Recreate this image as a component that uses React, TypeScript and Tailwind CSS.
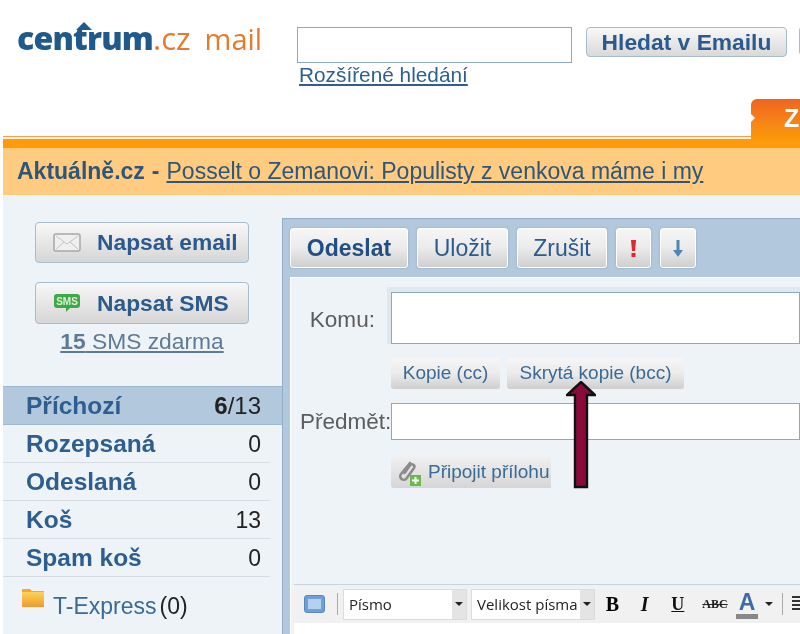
import React from "react";

const sans = "font-['Liberation_Sans',Arial,sans-serif]";
const btn = "bg-gradient-to-b from-[#f6f6f6] via-[#ebebeb] to-[#cfcfcf]";

function Envelope() {
  return (
    <svg width="28" height="19" viewBox="0 0 28 19" className="shrink-0">
      <rect x="1" y="1" width="26" height="17" rx="2" fill="#efefef" stroke="#a8a8a8" strokeWidth="1.5" />
      <path d="M3 3 L14 11 L25 3 M3 16 L11 9 M25 16 L17 9" fill="none" stroke="#c4c4c4" strokeWidth="1" />
    </svg>
  );
}

function SmsIcon() {
  return (
    <svg width="28" height="20" viewBox="0 0 28 20" className="shrink-0">
      <path d="M4 1 H24 a3 3 0 0 1 3 3 V12 a3 3 0 0 1 -3 3 H17 L13 19 V15 H4 a3 3 0 0 1 -3 -3 V4 a3 3 0 0 1 3 -3 Z" fill="#3fa84a" />
      <text x="14" y="12" textAnchor="middle" fontSize="10" fontWeight="700" fill="#d8f0d0" fontFamily="Liberation Sans">SMS</text>
    </svg>
  );
}

function Folder() {
  return (
    <svg width="24" height="21" viewBox="0 0 24 21" className="shrink-0">
      <defs>
        <linearGradient id="fg" x1="0" y1="0" x2="0" y2="1">
          <stop offset="0" stopColor="#fdd35a" />
          <stop offset="1" stopColor="#ee9a2c" />
        </linearGradient>
      </defs>
      <path d="M1 3 a1 1 0 0 1 1 -1 H9 L11 4 H23 V20 H1 Z" fill="#f2a833" />
      <rect x="1" y="5" width="22" height="15" fill="url(#fg)" />
    </svg>
  );
}

function Clip() {
  return (
    <svg width="28" height="28" viewBox="0 0 28 28" className="shrink-0">
      <path d="M15 4 L6 15 a3.5 3.5 0 0 0 5.5 4.5 L19 9 a2.4 2.4 0 0 0 -3.7 -3 L9.5 14" fill="none" stroke="#8c8c8c" strokeWidth="2.6" strokeLinecap="round" />
      <rect x="15" y="16" width="11" height="11" fill="#69b94d" />
      <path d="M20.5 18 V25 M17 21.5 H24" stroke="#fff" strokeWidth="2" />
    </svg>
  );
}

function NavRow({ name, count }: { name: string; count: string }) {
  return (
    <div className="h-[38px] mr-[12px] pl-[23px] pr-[9px] pt-[2px] flex items-center justify-between border-b border-[#d5dde3]">
      <span className="text-[24.5px] font-bold text-[#2e5d8f]">{name}</span>
      <span className="text-[23px] text-[#222]">{count}</span>
    </div>
  );
}

function ToolBtn({ children, className }: { children: React.ReactNode; className: string }) {
  return (
    <div className={`h-[40px] rounded-[3px] border border-white shadow-[0_0_2px_#8aa0b5] flex items-center justify-center text-[23px] text-[#2d5a8c] ${btn} ${className}`}>
      {children}
    </div>
  );
}

function Select({ label, w }: { label: string; w: string }) {
  return (
    <div className={`h-[31px] flex bg-white border border-[#dcdcdc] ${w}`}>
      <span className="flex-1 min-w-0 pl-[5px] text-[15px] leading-[29px] text-[#222] font-['Open_Sans',sans-serif] whitespace-nowrap">{label}</span>
      <span className="w-[14px] bg-[#e4e4e4] flex items-center justify-center shrink-0">
        <span className="w-0 h-0 border-x-[4px] border-x-transparent border-t-[4px] border-t-[#222]" />
      </span>
    </div>
  );
}

export default function App() {
  return (
    <div className={`relative w-[800px] h-[634px] overflow-hidden bg-white blur-[0.5px] ${sans}`}>
      {/* Header */}
      <div className="h-[136px] flex items-start">
        <div className="w-[297px] shrink-0 pl-[17px] pt-[18px] flex items-baseline whitespace-nowrap">
          <span className="relative text-[32px] leading-[40px] font-extrabold tracking-[-0.8px] text-[#1f5a8a] font-['Open_Sans',sans-serif]">
            centrum
            <svg width="16" height="9" viewBox="0 0 16 9" className="absolute left-[59px] top-[4px]">
              <path d="M8 0 L16 8 H0 Z" fill="#1f5a8a" />
            </svg>
          </span>
          <span className="text-[31px] leading-[40px] text-[#e67a2e] font-['Open_Sans',sans-serif]">.cz</span>
          <span className="ml-[14px] text-[29px] leading-[40px] text-[#e67a2e] font-['Open_Sans',sans-serif]">mail</span>
        </div>
        <div className="w-[275px] shrink-0 pt-[27px]">
          <div className="h-[36px] bg-white border border-[#8fa9bf]" />
          <a className="block pl-[2px] text-[20.8px] leading-[24px] text-[#2f5f92] underline whitespace-nowrap">Rozšířené hledání</a>
        </div>
        <div className="ml-[14px] mt-[27px] w-[201px] h-[30px] shrink-0 rounded-[4px] border border-[#a9bccb] flex items-center justify-center bg-gradient-to-b from-[#f8f8f8] to-[#d9d9d9] text-[22.8px] font-bold text-[#2d5a8c] whitespace-nowrap">
          Hledat v Emailu
        </div>
        <div className="ml-[12px] mt-[27px] w-[4px] h-[28px] shrink-0 rounded-l-[3px] border border-[#a9bccb] bg-[#eee]" />
      </div>

      {/* Tab over the orange line */}
      <div className="absolute left-[751px] top-[99px] w-[49px] h-[41px] rounded-tl-[6px] bg-gradient-to-b from-[#f0641f] to-[#fb9a05] pl-[33px] text-[25px] leading-[38px] font-bold text-white">
        Z
        <span className="absolute left-0 top-[15px] w-0 h-0 border-y-[4px] border-y-transparent border-l-[4px] border-l-white" />
      </div>

      {/* Orange line + news bar */}
      <div className="ml-[3px]">
        <div className="h-[12px] border-t border-[#f3a14e] bg-[#ff9a0a] shadow-[inset_0_2px_0_#fff3e0]" />
        <div className="h-[47px] bg-[#fecb80] pl-[14px] flex items-center text-[23px] whitespace-nowrap text-[#2f5679]">
          <b>Aktuálně.cz</b>
          <b className="mx-[7px]">-</b>
          <a className="underline text-[23px]">Posselt o Zemanovi: Populisty z venkova máme i my</a>
        </div>
      </div>

      {/* Body */}
      <div className="ml-[3px] h-[439px] bg-[#eef3f7] flex">
        {/* Sidebar */}
        <div className="w-[279px] shrink-0 flex flex-col">
          <div className="h-[191px] pt-[27px] pl-[32px]">
            <div className="h-[41px] w-[214px] rounded-[4px] border border-[#a9bccb] flex items-center pl-[17px] gap-[16px] text-[22.8px] font-bold text-[#2d5a8c] bg-gradient-to-b from-[#f8f8f8] to-[#d6d6d6]">
              <Envelope />
              Napsat email
            </div>
            <div className="mt-[19px] h-[42px] w-[214px] rounded-[4px] border border-[#a9bccb] flex items-center pl-[17px] gap-[16px] text-[22.8px] font-bold text-[#2d5a8c] bg-gradient-to-b from-[#f8f8f8] to-[#d6d6d6]">
              <SmsIcon />
              Napsat SMS
            </div>
            <div className="w-[214px] text-center mt-[3px] text-[22.8px] leading-[28px] text-[#5f7a94] underline">
              <b>15</b> SMS zdarma
            </div>
          </div>
          <div className="h-[39px] bg-[#b2c9dd] border-y border-[#9db8cf] pl-[23px] pr-[21px] pt-[1px] flex items-center justify-between">
            <span className="text-[24.5px] font-bold text-[#2e5d8f]">Příchozí</span>
            <span className="text-[24px] text-[#222]"><b>6</b>/13</span>
          </div>
          <NavRow name="Rozepsaná" count="0" />
          <NavRow name="Odeslaná" count="0" />
          <NavRow name="Koš" count="13" />
          <NavRow name="Spam koš" count="0" />
          <div className="pl-[18px] pt-[10px] flex items-start">
            <Folder />
            <span className="ml-[8px] mt-[5px] text-[23px] leading-[28px] text-[#3a6a95]">T-Express</span>
            <span className="ml-[3px] mt-[5px] text-[23px] leading-[28px] text-[#222]">(0)</span>
          </div>
        </div>

        {/* Main panel */}
        <div className="mt-[23px] flex-1 min-w-0 bg-[#b2c9dd] border-l border-t border-[#92afc7] pl-[7px] flex flex-col">
          <div className="h-[58px] shrink-0 flex items-center gap-[9px]">
            <ToolBtn className="w-[118px] font-bold text-[#214f83]">Odeslat</ToolBtn>
            <ToolBtn className="w-[91px]">Uložit</ToolBtn>
            <ToolBtn className="w-[90px]">Zrušit</ToolBtn>
            <ToolBtn className="w-[35px]">
              <svg width="7" height="17" viewBox="0 0 7 17">
                <path d="M1 0 H6 L5 11 H2 Z" fill="#e0262e" />
                <rect x="1.5" y="13" width="4" height="4" fill="#e0262e" />
              </svg>
            </ToolBtn>
            <ToolBtn className="w-[36px]">
              <svg width="10" height="17" viewBox="0 0 10 17">
                <path d="M3.5 0 H6.5 V10 H10 L5 17 L0 10 H3.5 Z" fill="#4f86b5" />
              </svg>
            </ToolBtn>
          </div>
          <div className="flex-1 min-h-0 bg-[#eef3f7] border-l border-t border-white flex flex-col overflow-hidden">
            <div className="flex pt-[9px]">
              <div className="w-[100px] shrink-0 pt-[15px] pr-[16px] text-right text-[22.6px] leading-[36px] text-[#5c5c5c]">Komu:</div>
              <div className="flex-1 h-[57px] bg-[#dfe8ef] pl-[1px] pt-[5px] -ml-[4px]">
                <div className="h-[52px] ml-[3px] bg-white border border-[#8ea8bf]" />
              </div>
            </div>
            <div className="flex gap-[7px] pl-[100px] mt-[14px]">
              <div className={`w-[109px] h-[31px] rounded-[3px] flex items-center justify-center text-[19px] text-[#3a6a95] whitespace-nowrap ${btn}`}>Kopie (cc)</div>
              <div className={`w-[177px] h-[31px] rounded-[3px] flex items-center justify-center text-[19px] text-[#3a6a95] whitespace-nowrap ${btn}`}>Skrytá kopie (bcc)</div>
            </div>
            <div className="flex items-center mt-[14px]">
              <div className="w-[100px] shrink-0 pl-[9px] text-[22.5px] text-[#5c5c5c] whitespace-nowrap">Předmět:</div>
              <div className="flex-1 h-[37px] bg-white border border-[#8ea8bf]" />
            </div>
            <div className="ml-[100px] mt-[17px] w-[160px] h-[31px] rounded-l-[3px] flex items-center text-[19px] text-[#3a6a95] whitespace-nowrap pl-[4px] gap-[5px] bg-gradient-to-b from-[#f0f0f0] to-[#d6d6d6]">
              <Clip />
              Připojit přílohu
            </div>
            <div className="mt-[96px] ml-[3px] h-[39px] shrink-0 bg-[#f1f1f1] border-t border-[#c9d4dc] flex items-center pl-[10px] whitespace-nowrap">
              <span className="w-[21px] h-[18px] rounded-[3px] bg-[#6f9fd8] border border-[#5a86bd] p-[3px] shrink-0">
                <span className="block h-full bg-[#b6d0f0]" />
              </span>
              <span className="ml-[12px] w-[1px] h-[22px] bg-[#aaa] shrink-0" />
              <span className="ml-[5px] shrink-0"><Select label="Písmo" w="w-[124px]" /></span>
              <span className="ml-[4px] shrink-0"><Select label="Velikost písma" w="w-[124px]" /></span>
              <b className="ml-[10px] w-[16px] text-center font-['Liberation_Serif',serif] text-[20px] font-extrabold text-black">B</b>
              <b className="ml-[18px] w-[14px] text-center font-['Liberation_Serif',serif] text-[20px] italic text-[#111]">I</b>
              <b className="ml-[19px] w-[16px] text-center font-['Liberation_Serif',serif] text-[18px] underline text-[#111]">U</b>
              <b className="ml-[17px] w-[24px] text-center font-['Liberation_Serif',serif] text-[12px] line-through text-[#222]">ABC</b>
              <span className="ml-[10px] w-[23px] text-center border-b-[5px] border-[#888] text-[23px] leading-[24px] font-bold text-[#3d6ca8]">A</span>
              <span className="ml-[7px] w-0 h-0 border-x-[4px] border-x-transparent border-t-[4px] border-t-[#222]" />
              <span className="ml-[9px] w-[1px] h-[22px] bg-[#aaa] shrink-0" />
              <span className="ml-[9px] w-[8px] h-[16px] shrink-0 bg-[repeating-linear-gradient(#333_0_2px,transparent_2px_4px)]" />
            </div>
            <div className="flex-1 bg-white ml-[3px]" />
          </div>
        </div>
      </div>

      {/* Annotation arrow */}
      <svg width="30" height="108" viewBox="0 0 30 108" className="absolute left-[566px] top-[381px]">
        <path d="M15 1 L29 14 H21 V106 H9 V14 H1 Z" fill="#8a0a3a" stroke="#111" strokeWidth="2.4" />
      </svg>
    </div>
  );
}
